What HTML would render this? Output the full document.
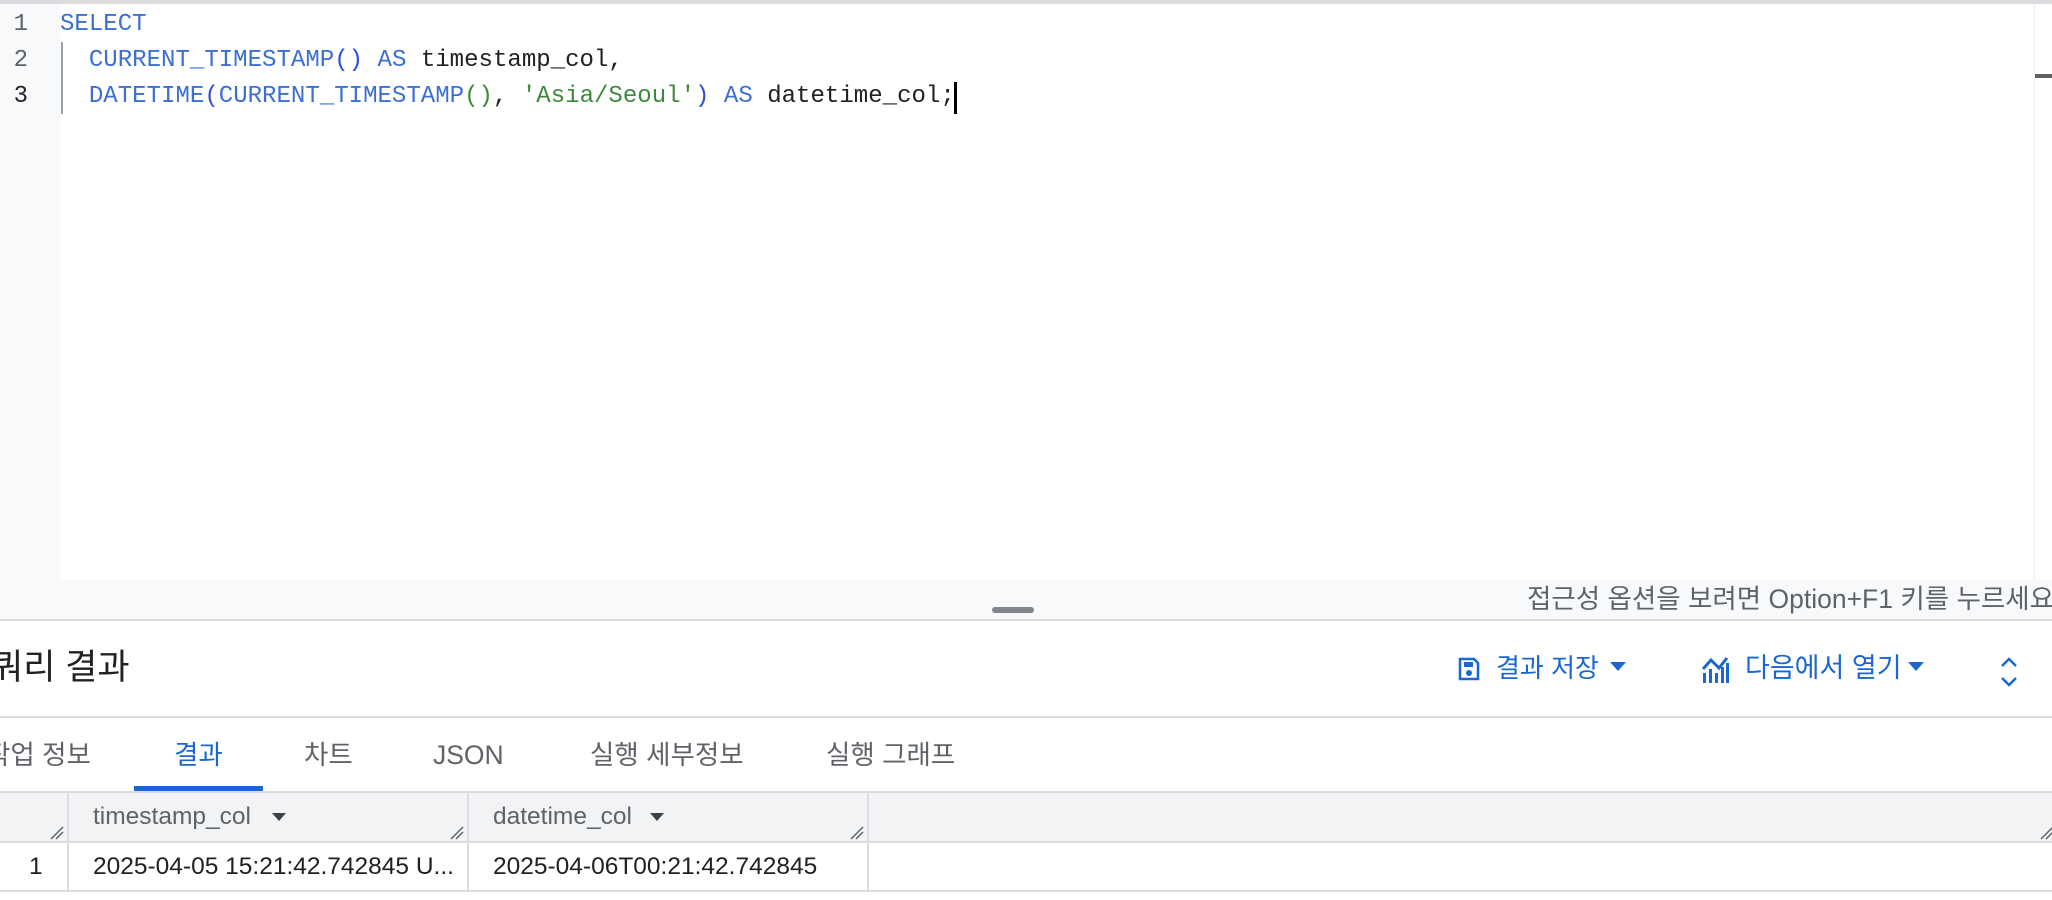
<!DOCTYPE html>
<html><head><meta charset="utf-8"><style>
*{margin:0;padding:0;box-sizing:border-box}
body{width:2052px;height:900px;overflow:hidden;background:#fff;position:relative;font-family:"Liberation Sans","Noto Sans CJK KR",sans-serif;}
.abs{position:absolute}
.mono{font-family:"Liberation Mono","DejaVu Sans Mono",monospace;font-size:24.05px;white-space:pre;line-height:36px}
.kw{color:#3b6fd4}.str{color:#3c8a3c}.par{color:#2f4fd6}.gp{color:#3c8a3c}
.tab{position:absolute;top:737px;font-size:26.5px;color:#5f6368;line-height:36px;white-space:nowrap}
.btn{color:#1a67d2;white-space:nowrap}
.cell{position:absolute;font-size:24.5px;line-height:30px;white-space:nowrap}
</style></head><body>
<div class="abs" style="left:0;top:0;width:2052px;height:4px;background:#dadce0"></div>
<div class="abs" style="left:0;top:4px;width:60px;height:576px;background:#f8f9fa"></div>
<div class="abs" style="left:2034px;top:4px;width:1px;height:576px;background:#eceef0"></div>
<div class="abs" style="left:2035px;top:74px;width:17px;height:4px;background:#616161"></div>
<div class="abs mono" style="left:0;top:7px;width:28px;text-align:right;color:#5f6368;font-size:24px">1<br>2<br><span style="color:#202124">3</span></div>
<div class="abs" style="left:61px;top:42px;width:2px;height:72px;background:#9aa0a6"></div>
<div class="abs mono" style="left:60px;top:7px;color:#202124"><span class="kw">SELECT</span>
  <span class="kw">CURRENT_TIMESTAMP</span><span class="par">()</span> <span class="kw">AS</span> timestamp_col,
  <span class="kw">DATETIME</span><span class="par">(</span><span class="kw">CURRENT_TIMESTAMP</span><span class="gp">()</span>, <span class="str">'Asia/Seoul'</span><span class="par">)</span> <span class="kw">AS</span> datetime_col;</div>
<div class="abs" style="left:954px;top:82px;width:3px;height:32px;background:#000"></div>
<div class="abs" style="left:0;top:580px;width:2052px;height:39px;background:#f8f9fa"></div>
<div class="abs" style="left:992px;top:607px;width:42px;height:6px;border-radius:3px;background:#80868b"></div>
<div class="abs" style="left:1527px;top:581px;font-size:26.5px;color:#5f6368;white-space:nowrap;line-height:36px">접근성 옵션을 보려면 Option+F1 키를 누르세요</div>
<div class="abs" style="left:0;top:619px;width:2052px;height:2px;background:#dadce0"></div>
<div class="abs" style="left:-9px;top:646px;font-size:35px;color:#202124;line-height:44px;white-space:nowrap">쿼리 결과</div>
<svg class="abs" style="left:1458px;top:657px" width="22" height="24" viewBox="0 0 22 24"><path d="M2 2h14l4 4v16H2z" fill="none" stroke="#1a67d2" stroke-width="2.5"/><rect x="6" y="5" width="9" height="5" fill="#1a67d2"/><circle cx="11" cy="16" r="3" fill="#1a67d2"/></svg>
<div class="abs btn" style="left:1496px;top:650px;line-height:36px;font-size:26px">결과 저장</div>
<svg class="abs" style="left:1610px;top:662px" width="16" height="10"><path d="M0 0h16L8 9z" fill="#1a67d2"/></svg>
<svg class="abs" style="left:1702px;top:655px" width="28" height="28" viewBox="0 0 28 28"><path d="M1 14 9 5l8 8 8-10" fill="none" stroke="#1a67d2" stroke-width="3"/><rect x="1" y="18" width="3" height="10" fill="#1a67d2"/><rect x="7" y="14" width="3" height="14" fill="#1a67d2"/><rect x="13" y="18" width="3" height="10" fill="#1a67d2"/><rect x="19" y="12" width="3" height="16" fill="#1a67d2"/><rect x="24" y="8" width="3" height="20" fill="#1a67d2"/></svg>
<div class="abs btn" style="left:1745px;top:649px;line-height:38px;font-size:27px">다음에서 열기</div>
<svg class="abs" style="left:1908px;top:662px" width="16" height="10"><path d="M0 0h16L8 9z" fill="#1a67d2"/></svg>
<svg class="abs" style="left:2000px;top:656px" width="18" height="32"><path d="M2 10 9 3l7 7M2 22l7 7 7-7" fill="none" stroke="#1a67d2" stroke-width="2.5"/></svg>
<div class="abs" style="left:0;top:716px;width:2052px;height:2px;background:#dadce0"></div>
<div class="tab" style="left:-14px">작업 정보</div>
<div class="tab" style="left:174px;color:#1a67d2">결과</div>
<div class="tab" style="left:304px">차트</div>
<div class="tab" style="left:433px">JSON</div>
<div class="tab" style="left:590px">실행 세부정보</div>
<div class="tab" style="left:826px">실행 그래프</div>
<div class="abs" style="left:134px;top:786px;width:129px;height:5px;background:#1a67d2"></div>
<div class="abs" style="left:0;top:791px;width:2052px;height:52px;background:#f1f3f4;border-top:2px solid #dadce0;border-bottom:2px solid #dadce0"></div>
<div class="abs" style="left:0;top:843px;width:2052px;height:49px;border-bottom:2px solid #dadce0"></div>
<div class="abs" style="left:67px;top:791px;width:2px;height:101px;background:#dadce0"></div>
<div class="abs" style="left:467px;top:791px;width:2px;height:101px;background:#dadce0"></div>
<div class="abs" style="left:867px;top:791px;width:2px;height:101px;background:#dadce0"></div>
<svg class="abs" style="left:50px;top:826px" width="14" height="14"><path d="M1 13 13 1M6 13 13 6" stroke="#5f6368" stroke-width="1.5"/></svg>
<svg class="abs" style="left:450px;top:826px" width="14" height="14"><path d="M1 13 13 1M6 13 13 6" stroke="#5f6368" stroke-width="1.5"/></svg>
<svg class="abs" style="left:850px;top:826px" width="14" height="14"><path d="M1 13 13 1M6 13 13 6" stroke="#5f6368" stroke-width="1.5"/></svg>
<svg class="abs" style="left:2040px;top:826px" width="14" height="14"><path d="M1 13 13 1M6 13 13 6" stroke="#5f6368" stroke-width="1.5"/></svg>
<div class="cell" style="left:93px;top:802px;color:#5f6368">timestamp_col</div>
<svg class="abs" style="left:272px;top:813px" width="14" height="9"><path d="M0 0h14L7 8z" fill="#3c4043"/></svg>
<div class="cell" style="left:493px;top:802px;color:#5f6368">datetime_col</div>
<svg class="abs" style="left:650px;top:813px" width="14" height="9"><path d="M0 0h14L7 8z" fill="#3c4043"/></svg>
<div class="cell" style="left:29px;top:852px;color:#202124">1</div>
<div class="cell" style="left:93px;top:852px;color:#202124">2025-04-05 15:21:42.742845 U...</div>
<div class="cell" style="left:493px;top:852px;color:#202124">2025-04-06T00:21:42.742845</div>
</body></html>
